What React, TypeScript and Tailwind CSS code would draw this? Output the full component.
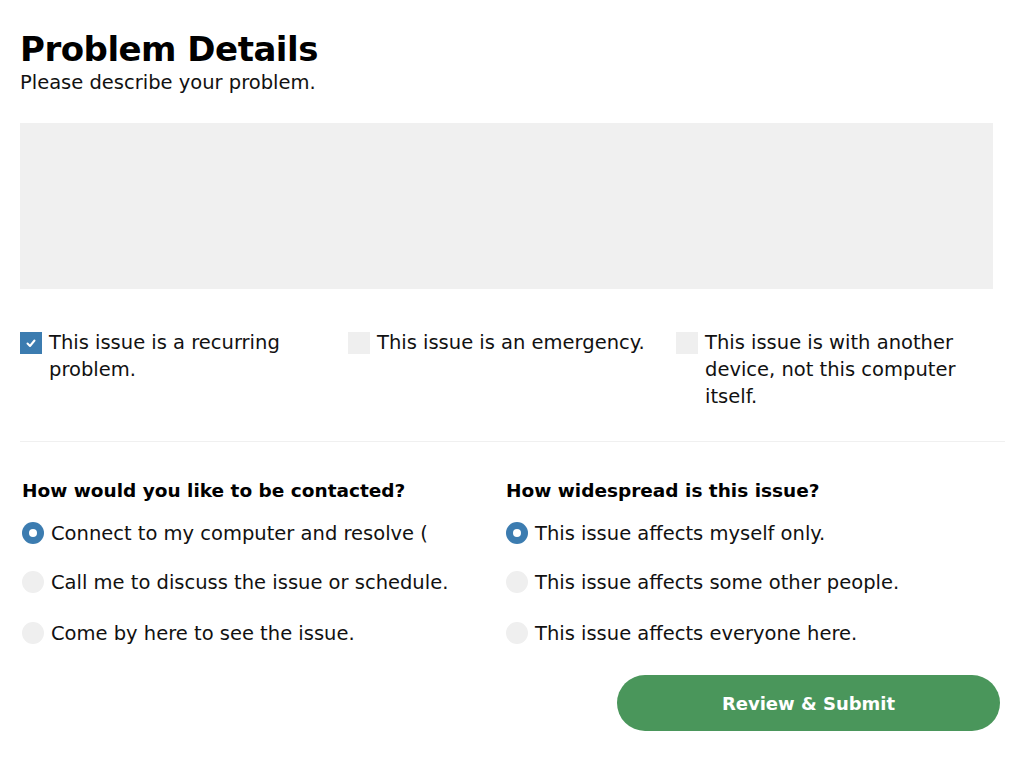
const contactOptions = [
  { label: 'Connect to my computer and resolve ( without a visit )', checked: true, clip: true, gap: '' },
  { label: 'Call me to discuss the issue or schedule.', checked: false, clip: false, gap: 'mt-[18px]' },
  { label: 'Come by here to see the issue.', checked: false, clip: false, gap: 'mt-[24px]' },
];

const spreadOptions = [
  { label: 'This issue affects myself only.', checked: true, gap: '' },
  { label: 'This issue affects some other people.', checked: false, gap: 'mt-[22px]' },
  { label: 'This issue affects everyone here.', checked: false, gap: 'mt-[24px]' },
];

function Checkbox({ checked, label }: { checked: boolean; label: string }) {
  return (
    <label className="flex items-start gap-[7px]">
      <span
        className={
          checked
            ? 'mt-[3px] w-[22px] h-[22px] shrink-0 bg-[#3c7cb0] flex items-center justify-center'
            : 'mt-[3px] w-[22px] h-[22px] shrink-0 bg-[#efefef]'
        }
      >
        {checked && (
          <svg viewBox="0 0 12 12" className="w-[12px] h-[12px]" fill="none" stroke="white" strokeWidth="2" strokeLinecap="round" strokeLinejoin="round">
            <path d="M2.5 6.5 L5 9 L9.5 3.5" />
          </svg>
        )}
      </span>
      <span className="text-[19.5px] leading-[27px] text-[#111]">{label}</span>
    </label>
  );
}

function Radio({ checked, label, clip, className }: { checked: boolean; label: string; clip?: boolean; className?: string }) {
  return (
    <label className={'flex items-start gap-[7px] ' + (className ?? '')}>
      <span
        className={
          checked
            ? 'mt-[2px] w-[22px] h-[22px] shrink-0 rounded-full bg-[#3c7cb0] flex items-center justify-center'
            : 'mt-[2px] w-[22px] h-[22px] shrink-0 rounded-full bg-[#efefef]'
        }
      >
        {checked && <span className="w-[8px] h-[8px] rounded-full bg-white" />}
      </span>
      <span
        className={
          clip
            ? 'w-[420px] h-[31px] overflow-hidden text-[19.5px] leading-[27px] text-[#111]'
            : 'text-[19.5px] leading-[27px] text-[#111]'
        }
      >
        {label}
      </span>
    </label>
  );
}

export default function App() {
  return (
    <div className="w-[1024px] h-[764px] bg-white font-['DejaVu_Sans',sans-serif] text-black overflow-hidden">
      <div className="pl-[20px] pr-[20px] pt-[28px]">
        {/* Heading */}
        <h1 className="text-[34px] leading-[42px] font-bold tracking-[-0.5px]">Problem Details</h1>
        <p className="text-[19.5px] leading-[26px] text-[#111]">Please describe your problem.</p>

        {/* Description */}
        <textarea className="mt-[27px] block w-[973px] h-[166px] bg-[#f0f0f0] resize-none outline-none" />

        {/* Flags */}
        <div className="mt-[40px] grid grid-cols-3 w-[984px]">
          <div className="pr-[36px]">
            <Checkbox checked label="This issue is a recurring problem." />
          </div>
          <div className="pr-[16px]">
            <Checkbox checked={false} label="This issue is an emergency." />
          </div>
          <div className="pr-[20px]">
            <Checkbox checked={false} label="This issue is with another device, not this computer itself." />
          </div>
        </div>

        <div className="mt-[31px] h-px w-[985px] bg-[#f0f0f0]" />

        {/* Questions */}
        <div className="mt-[37px] pl-[2px] grid grid-cols-2 w-[970px]">
          <div>
            <h2 className="text-[18.5px] leading-[24px] font-bold">How would you like to be contacted?</h2>
            <div className="mt-[17px] flex flex-col">
              {contactOptions.map((o) => (
                <Radio key={o.label} checked={o.checked} label={o.label} clip={o.clip} className={o.gap} />
              ))}
            </div>
          </div>
          <div>
            <h2 className="text-[18.5px] leading-[24px] font-bold">How widespread is this issue?</h2>
            <div className="mt-[17px] flex flex-col">
              {spreadOptions.map((o) => (
                <Radio key={o.label} checked={o.checked} label={o.label} className={o.gap} />
              ))}
            </div>
          </div>
        </div>

        {/* Submit */}
        <div className="mt-[28px] flex justify-end w-[980px]">
          <button className="w-[383px] h-[56px] rounded-full bg-[#4a965b] text-white text-[18px] font-bold">
            Review &amp; Submit
          </button>
        </div>
      </div>
    </div>
  );
}
